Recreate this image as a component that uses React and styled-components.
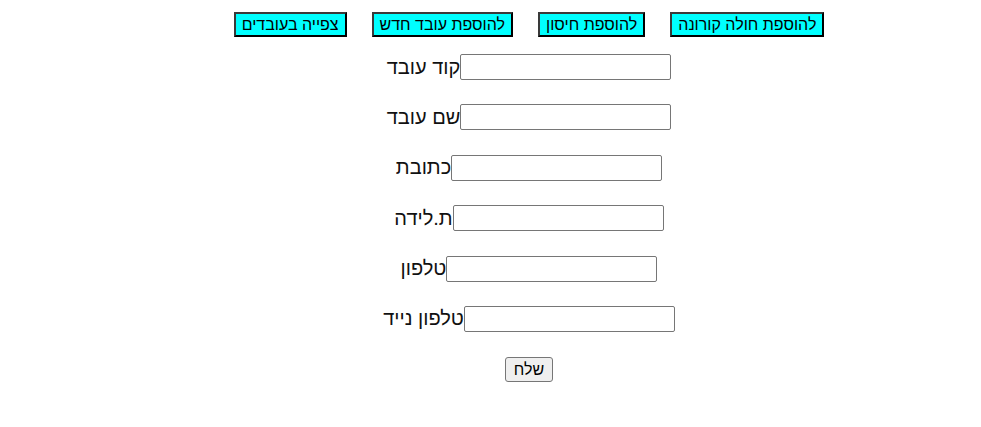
import { useState } from "react";
import styled, { createGlobalStyle } from "styled-components";

const GlobalStyle = createGlobalStyle`
  body {
    margin: 8px;
    background: #ffffff;
    font-family: "Liberation Sans", Arial, sans-serif;
    color: #000000;
  }
`;

const Page = styled.div`
  padding-left: 77px;
  padding-top: 4px;
`;

const Nav = styled.nav`
  display: flex;
  flex-direction: row-reverse;
  justify-content: center;
  gap: 25px;
`;

const NavButton = styled.button`
  height: 25px;
  padding: 0 6px;
  background: #00ffff;
  border: 2px outset #2a2a2a;
  border-top-color: #3a3a3a;
  border-left-color: #3a3a3a;
  border-right-color: #111111;
  border-bottom-color: #111111;
  font-family: "Liberation Sans", Arial, sans-serif;
  font-size: 16px;
  color: #000000;
  direction: rtl;
  cursor: pointer;
`;

const Form = styled.form`
  display: flex;
  flex-direction: column;
  align-items: center;
  gap: 24.4px;
  margin-top: 17px;
`;

const Row = styled.div`
  display: flex;
  align-items: center;
  justify-content: center;
  height: 26px;
`;

const Label = styled.label`
  font-size: 20px;
  direction: rtl;
  color: #111111;
`;

const Input = styled.input`
  box-sizing: border-box;
  width: 211px;
  height: 26px;
  border: 1px solid #767676;
  border-radius: 2px;
  padding: 1px 2px;
  font-size: 16px;
  font-family: "Liberation Sans", Arial, sans-serif;
`;

const Submit = styled.button`
  margin-top: 1px;
  height: 25px;
  padding: 1px 8px;
  background: #efefef;
  border: 1px solid #767676;
  border-radius: 3px;
  font-family: "Liberation Sans", Arial, sans-serif;
  font-size: 16px;
  color: #000000;
  direction: rtl;
`;

const fields = [
  { name: "code", label: "קוד עובד" },
  { name: "name", label: "שם עובד" },
  { name: "address", label: "כתובת" },
  { name: "birth", label: "ת.לידה" },
  { name: "phone", label: "טלפון" },
  { name: "mobile", label: "טלפון נייד" },
];

export default function App() {
  const [values, setValues] = useState({});

  const handleChange = (e) => {
    setValues({ ...values, [e.target.name]: e.target.value });
  };

  return (
    <Page>
      <GlobalStyle />
      <Nav>
        <NavButton>להוספת חולה קורונה</NavButton>
        <NavButton>להוספת חיסון</NavButton>
        <NavButton>להוספת עובד חדש</NavButton>
        <NavButton>צפייה בעובדים</NavButton>
      </Nav>
      <Form onSubmit={(e) => e.preventDefault()}>
        {fields.map((f) => (
          <Row key={f.name}>
            <Label htmlFor={f.name}>{f.label}</Label>
            <Input
              id={f.name}
              name={f.name}
              value={values[f.name] || ""}
              onChange={handleChange}
            />
          </Row>
        ))}
        <Submit type="submit">שלח</Submit>
      </Form>
    </Page>
  );
}
